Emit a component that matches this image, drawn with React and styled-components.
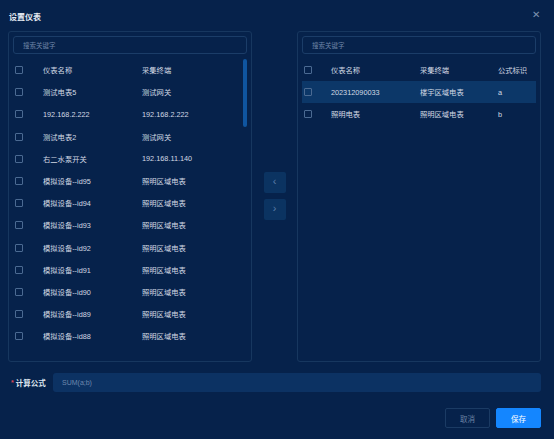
import React from "react";
import styled, { createGlobalStyle } from "styled-components";

const Global = createGlobalStyle`
  html, body { margin: 0; padding: 0; background: #06224b; }
  body { font-family: "Liberation Sans", "Noto Sans CJK SC", sans-serif; }
  * { box-sizing: border-box; }
`;

const Dialog = styled.div`
  width: 554px;
  height: 439px;
  background: #06224b;
  position: relative;
  padding: 0 13px 0 8px;
  display: flex;
  flex-direction: column;
`;

const Title = styled.div`
  height: 31px;
  padding: 13px 0 0 1px;
  font-size: 8px;
  font-weight: bold;
  color: #e6ecf4;
  line-height: 10px;
`;

const Close = styled.div`
  position: absolute;
  top: 10px;
  right: 14px;
  font-size: 10px;
  color: #7d92b0;
  line-height: 10px;
`;

const Transfer = styled.div`
  display: flex;
  height: 331px;
`;

const Panel = styled.div`
  width: 245px;
  height: 100%;
  border: 1px solid #17375f;
  border-radius: 3px;
  padding: 4px 4px 0 4px;
  display: flex;
  flex-direction: column;
`;

const Search = styled.div`
  height: 18px;
  border: 1px solid #1b3d68;
  border-radius: 3px;
  padding-left: 9px;
  display: flex;
  align-items: center;
  font-size: 6.5px;
  color: #6d84a6;
`;

const ListWrap = styled.div`
  position: relative;
  margin-top: 5px;
  flex: 1;
`;

const Row = styled.div`
  display: grid;
  grid-template-columns: ${(p) => p.$cols};
  align-items: center;
  height: 22.2px;
  padding-left: 2px;
  font-size: 7.3px;
  color: #d2d9e3;
  background: ${(p) => (p.$active ? "#0c3768" : "transparent")};
`;

const Check = styled.span`
  width: 8px;
  height: 8px;
  border: 1px solid #4b6a92;
  border-radius: 1px;
  display: block;
`;

const Cell = styled.span`
  white-space: nowrap;
`;

const Thumb = styled.div`
  position: absolute;
  top: 0;
  right: 0;
  width: 4px;
  height: 68px;
  border-radius: 2px;
  background: #0f55a0;
`;

const Middle = styled.div`
  width: 45px;
  display: flex;
  flex-direction: column;
  align-items: center;
  padding-top: 141px;
  gap: 6px;
`;

const Arrow = styled.div`
  width: 22px;
  height: 21px;
  border-radius: 2px;
  background: #0b3361;
  color: #5a7ca8;
  font-size: 11px;
  line-height: 1;
  padding-bottom: 2px;
  display: flex;
  align-items: center;
  justify-content: center;
`;

const FormRow = styled.div`
  display: flex;
  align-items: center;
  margin-top: 11px;
  height: 19px;
`;

const Label = styled.div`
  width: 45px;
  padding-left: 3px;
  font-size: 7.5px;
  font-weight: bold;
  color: #dfe6ef;
  display: flex;
  align-items: center;
  gap: 2px;
`;

const Star = styled.span`
  color: #d9485a;
  font-size: 7px;
`;

const Input = styled.div`
  flex: 1;
  height: 19px;
  background: #0c3263;
  border-radius: 3px;
  padding-left: 9px;
  display: flex;
  align-items: center;
  font-size: 7px;
  color: #6e88ad;
`;

const Footer = styled.div`
  display: flex;
  justify-content: flex-end;
  gap: 6px;
  margin-top: 16px;
`;

const Button = styled.div`
  width: 45px;
  height: 20px;
  border-radius: 2px;
  display: flex;
  align-items: center;
  justify-content: center;
  font-size: 7.5px;
  color: ${(p) => (p.$primary ? "#ffffff" : "#6a82a5")};
  background: ${(p) => (p.$primary ? "#1486ff" : "transparent")};
  border: 1px solid ${(p) => (p.$primary ? "#1486ff" : "#1b3b64")};
`;

const leftRows = [
  ["测试电表5", "测试网关"],
  ["192.168.2.222", "192.168.2.222"],
  ["测试电表2", "测试网关"],
  ["右二水泵开关", "192.168.11.140"],
  ["模拟设备--id95", "照明区域电表"],
  ["模拟设备--id94", "照明区域电表"],
  ["模拟设备--id93", "照明区域电表"],
  ["模拟设备--id92", "照明区域电表"],
  ["模拟设备--id91", "照明区域电表"],
  ["模拟设备--id90", "照明区域电表"],
  ["模拟设备--id89", "照明区域电表"],
  ["模拟设备--id88", "照明区域电表"],
];

const rightRows = [
  ["202312090033", "楼宇区域电表", "a", true],
  ["照明电表", "照明区域电表", "b", false],
];

const LEFT_COLS = "28px 99px 1fr";
const RIGHT_COLS = "27px 89px 78px 1fr";

export default function App() {
  return (
    <Dialog>
      <Global />
      <Title>设置仪表</Title>
      <Close>✕</Close>
      <Transfer>
        <Panel>
          <Search>搜索关键字</Search>
          <ListWrap>
            <Row $cols={LEFT_COLS}>
              <Check />
              <Cell>仪表名称</Cell>
              <Cell>采集终端</Cell>
            </Row>
            {leftRows.map((r, i) => (
              <Row key={i} $cols={LEFT_COLS}>
                <Check />
                <Cell>{r[0]}</Cell>
                <Cell>{r[1]}</Cell>
              </Row>
            ))}
            <Thumb />
          </ListWrap>
        </Panel>
        <Middle>
          <Arrow>‹</Arrow>
          <Arrow>›</Arrow>
        </Middle>
        <Panel>
          <Search>搜索关键字</Search>
          <ListWrap>
            <Row $cols={RIGHT_COLS}>
              <Check />
              <Cell>仪表名称</Cell>
              <Cell>采集终端</Cell>
              <Cell>公式标识</Cell>
            </Row>
            {rightRows.map((r, i) => (
              <Row key={i} $cols={RIGHT_COLS} $active={r[3]}>
                <Check />
                <Cell>{r[0]}</Cell>
                <Cell>{r[1]}</Cell>
                <Cell>{r[2]}</Cell>
              </Row>
            ))}
          </ListWrap>
        </Panel>
      </Transfer>
      <FormRow>
        <Label>
          <Star>*</Star>计算公式
        </Label>
        <Input>SUM(a;b)</Input>
      </FormRow>
      <Footer>
        <Button>取消</Button>
        <Button $primary>保存</Button>
      </Footer>
    </Dialog>
  );
}
